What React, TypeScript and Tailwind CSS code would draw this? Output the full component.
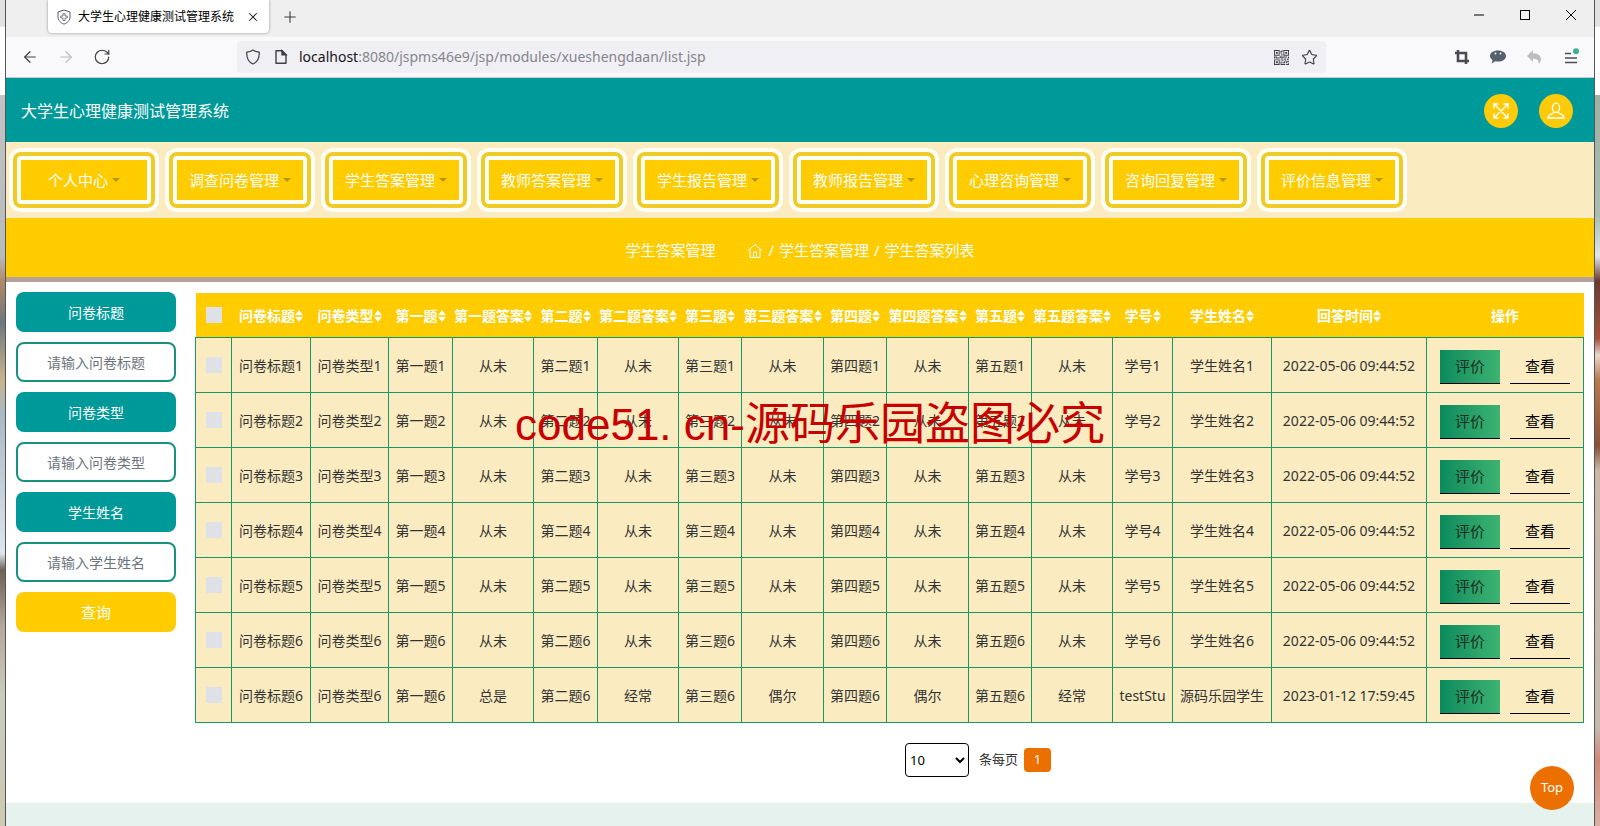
import { useState } from "react";
import { ArrowLeft, ArrowRight, Minus, Plus, RotateCw, Star, X } from "lucide-react";
import { BsQrCode } from "react-icons/bs";

const navItems = [
  "个人中心",
  "调查问卷管理",
  "学生答案管理",
  "教师答案管理",
  "学生报告管理",
  "教师报告管理",
  "心理咨询管理",
  "咨询回复管理",
  "评价信息管理",
];

const filters = [
  { id: "title", label: "问卷标题" },
  { id: "type", label: "问卷类型" },
  { id: "student", label: "学生姓名" },
];

const columns = [
  { label: "问卷标题", width: "w-[79px]" },
  { label: "问卷类型", width: "w-[78px]" },
  { label: "第一题", width: "w-[64px]" },
  { label: "第一题答案", width: "w-[81px]" },
  { label: "第二题", width: "w-[64px]" },
  { label: "第二题答案", width: "w-[81px]" },
  { label: "第三题", width: "w-[63px]" },
  { label: "第三题答案", width: "w-[82px]" },
  { label: "第四题", width: "w-[63px]" },
  { label: "第四题答案", width: "w-[82px]" },
  { label: "第五题", width: "w-[63px]" },
  { label: "第五题答案", width: "w-[81px]" },
  { label: "学号", width: "w-[60px]" },
  { label: "学生姓名", width: "w-[99px]" },
  { label: "回答时间", width: "w-[155px]" },
];

type Row = { no: number; answers: string[]; studentNo: string; student: string; time: string };

const rows: Row[] = [
  ...[1, 2, 3, 4, 5, 6].map((no) => ({
    no,
    answers: ["从未", "从未", "从未", "从未", "从未"],
    studentNo: `学号${no}`,
    student: `学生姓名${no}`,
    time: "2022-05-06 09:44:52",
  })),
  { no: 6, answers: ["总是", "经常", "偶尔", "偶尔", "经常"], studentNo: "testStu", student: "源码乐园学生", time: "2023-01-12 17:59:45" },
];

const questions = ["第一题", "第二题", "第三题", "第四题", "第五题"];

function rowCells(row: Row) {
  return [
    `问卷标题${row.no}`,
    `问卷类型${row.no}`,
    ...questions.flatMap((question, i) => [`${question}${row.no}`, row.answers[i]]),
    row.studentNo,
    row.student,
    row.time,
  ];
}

function SortIcon() {
  return (
    <svg viewBox="0 0 8 12" className="h-3 w-2 shrink-0" fill="currentColor" aria-hidden="true">
      <path d="M4 0 8 5.300H0zM4 12 0 6.700h8z" />
    </svg>
  );
}

function BrowserChrome() {
  return (
    <div className="text-[#3f3f46]">
      <div className="flex h-[37px] items-start justify-between bg-[#efefef]">
        <div className="flex items-center">
          <div className="ml-[42px] flex h-[33px] w-[221px] items-center rounded-b-[4px] bg-white pl-2 shadow-[0_0_3px_#00000066]">
            <svg viewBox="0 0 16 16" className="mr-1.5 size-4" fill="none" stroke="#5b5b66" aria-hidden="true">
              <path d="M8 1 14 3v5c0 3.500-2.500 5.800-6 7.200C4.500 13.800 2 11.500 2 8V3z" />
              <path d="M7 4.500h2V7h2.300v2H9v2.500H7V9H4.700V7H7z" strokeWidth="0.8" />
            </svg>
            <span className="text-xs text-black">大学生心理健康测试管理系统</span>
            <button type="button" aria-label="关闭标签页" className="ml-3 text-[#222]">
              <X className="size-3.5" strokeWidth={1.8} />
            </button>
          </div>
          <button type="button" aria-label="新标签页" className="ml-3">
            <Plus className="size-[18px]" strokeWidth={1.5} />
          </button>
        </div>
        <div className="flex gap-[30px] pt-[7px] pr-[15px] text-black">
          <button type="button" aria-label="最小化">
            <Minus className="size-4" strokeWidth={1.5} />
          </button>
          <button type="button" aria-label="最大化">
            <svg viewBox="0 0 16 16" className="size-4" fill="none" stroke="currentColor" aria-hidden="true">
              <rect x="3.500" y="3.500" width="9" height="9" />
            </svg>
          </button>
          <button type="button" aria-label="关闭">
            <svg viewBox="0 0 16 16" className="size-4" fill="none" stroke="currentColor" aria-hidden="true">
              <path d="M3 3l10 10M13 3 3 13" />
            </svg>
          </button>
        </div>
      </div>
      <div className="flex h-[41px] items-center border-b border-[#c9c9cf] bg-[#f9f9fb]">
        <div className="flex w-[231px] items-center gap-[18px] pl-[15px]">
          <button type="button" aria-label="后退">
            <ArrowLeft className="size-[18px]" strokeWidth={1.6} />
          </button>
          <button type="button" aria-label="前进" className="text-[#bcbcc2]">
            <ArrowRight className="size-[18px]" strokeWidth={1.6} />
          </button>
          <button type="button" aria-label="刷新">
            <RotateCw className="size-[18px]" strokeWidth={1.6} />
          </button>
        </div>
        <div className="flex h-8 flex-1 items-center rounded bg-[#f0f0f4] px-2">
          <svg viewBox="0 0 16 16" className="size-4" fill="none" stroke="currentColor" strokeWidth="1.200" aria-hidden="true">
            <path d="M8 1c2 1.500 4 2 6.300 2.200C14.500 9 12.500 13 8 15 3.500 13 1.500 9 1.700 3.200 4 3 6 2.500 8 1z" strokeLinejoin="round" />
          </svg>
          <svg viewBox="0 0 16 16" className="ml-3 size-4" fill="none" stroke="currentColor" strokeWidth="1.400" aria-hidden="true">
            <path d="M3 1.700h6l4 4v8.600H3z" strokeLinejoin="round" />
            <path d="M9 1.700v4h4z" fill="currentColor" />
          </svg>
          <p className="ml-2.5 flex-1 text-sm text-[#85858c]">
            <span className="text-[#15141a]">localhost</span>:8080/jspms46e9/jsp/modules/xueshengdaan/list.jsp
          </p>
          <BsQrCode className="mr-3 size-[15px]" />
          <Star className="size-[17px]" strokeWidth={1.6} />
        </div>
        <div className="flex w-[268px] items-center justify-end gap-5 pr-3.5 text-[#4a4a55]">
          <svg viewBox="0 0 16 16" className="size-4" fill="none" stroke="currentColor" strokeWidth="2.600" aria-hidden="true">
            <path d="M4 1v11h11M1 4h11v11" />
          </svg>
          <svg viewBox="0 0 16 16" className="size-4" aria-hidden="true">
            <path d="M8 1.500c4.500 0 8 2.300 8 5.500s-3.500 5.600-8 5.600c-1 0-1.800-.1-2.600-.3L1.600 14.500l.9-3.400C1.200 10 0 8.600 0 7c0-3.200 3.500-5.500 8-5.500z" fill="#56606f" />
            <circle cx="5.500" cy="4.500" r="0.9" fill="#fff" />
            <circle cx="10.500" cy="4.500" r="0.9" fill="#fff" />
          </svg>
          <svg viewBox="0 0 16 16" className="size-4 text-[#bdbdbf]" aria-hidden="true">
            <path d="M7 1v3.200c5 .1 8 2.300 8 6 0 2-1 3.600-2.400 4.800.6-3.500-1.300-5.200-5.600-5.300V13L1 7z" fill="currentColor" />
          </svg>
          <svg viewBox="0 0 18 18" className="size-[18px]" aria-hidden="true">
            <path d="M3 5.500h6M3 10h12M3 14.500h12" stroke="currentColor" strokeWidth="1.400" />
            <circle cx="14" cy="3.200" r="3" fill="#3fb093" />
          </svg>
        </div>
      </div>
    </div>
  );
}

function NavButton({ label }: { label: string }) {
  return (
    <button type="button" className="h-14 w-[142px] rounded-lg border-4 border-[#eecb26] bg-[#fffff5] p-1 text-[15px] text-white shadow-[0_0_0_4px_#fffff5]">
      <span className="flex h-full items-center justify-center gap-1 bg-[#ffcc00]">
        {label}
        <svg viewBox="0 0 8 4" className="h-1 w-2" fill="#b8960c" aria-hidden="true">
          <path d="M0 0h8L4 4z" />
        </svg>
      </span>
    </button>
  );
}

function SearchPanel() {
  return (
    <form className="flex w-40 shrink-0 flex-col gap-2.5 pt-2.5 text-sm" onSubmit={(e) => e.preventDefault()}>
      {filters.map((filter) => (
        <div key={filter.id} className="flex flex-col gap-2.5">
          <label htmlFor={filter.id} className="flex h-10 items-center justify-center rounded-lg bg-[#009999] pt-0.5 text-white">
            {filter.label}
          </label>
          <input
            id={filter.id}
            type="text"
            placeholder={`请输入${filter.label}`}
            className="h-10 w-full rounded-lg border-2 border-[#1a9080] bg-white text-center text-[#333] placeholder:text-[#6c757d]"
          />
        </div>
      ))}
      <button type="submit" className="h-10 rounded-lg bg-[#ffcc00] pt-0.5 text-[15px] text-white">
        查询
      </button>
    </form>
  );
}

function AnswerTable() {
  return (
    <table className="w-full table-fixed border-collapse text-center text-sm whitespace-nowrap text-[#333]">
      <colgroup>
        <col className="w-[36px]" />
        {columns.map((column) => (
          <col key={column.label} className={column.width} />
        ))}
        <col className="w-[157px]" />
      </colgroup>
      <thead>
        <tr className="h-11 bg-[#ffcc00] text-white">
          <th>
            <input type="checkbox" aria-label="全选" className="mx-auto block size-4 appearance-none bg-[#dee2e6]" />
          </th>
          {columns.map((column) => (
            <th key={column.label} className="pt-0.5 font-bold">
              <span className="flex items-center justify-center">
                {column.label}
                <SortIcon />
              </span>
            </th>
          ))}
          <th className="pt-0.5 font-bold">操作</th>
        </tr>
      </thead>
      <tbody>
        {rows.map((row, index) => (
          <tr key={index} className="h-[55px] bg-[#faecc0]">
            <td className="border border-[#1a9767]">
              <input type="checkbox" aria-label={`选择第${index + 1}行`} className="mx-auto block size-4 appearance-none bg-[#dee2e6]" />
            </td>
            {rowCells(row).map((cell, i) => (
              <td key={i} className="border border-[#1a9767] pt-0.5">
                {cell}
              </td>
            ))}
            <td className="border border-[#1a9767]">
              <div className="flex justify-center gap-2.5 pt-1 text-[15px] text-black">
                <button type="button" className="h-[34px] w-[60px] border-b border-black bg-linear-to-r from-[#078a5e] to-[#3cb371] pt-0.5 text-[#1c2f20]">
                  评价
                </button>
                <button type="button" className="h-[34px] w-[60px] border-b border-black pt-0.5">
                  查看
                </button>
              </div>
            </td>
          </tr>
        ))}
      </tbody>
    </table>
  );
}

export default function App() {
  const [pageSize, setPageSize] = useState("10");

  return (
    <div className="flex min-h-screen bg-[#c3c5c2] font-['Noto_Sans','Noto_Sans_CJK_SC',sans-serif]">
      <div className="w-[5px] shrink-0 bg-[linear-gradient(#e3e3e6_0_27px,#fff_27px_95px,#c0c4c4_95px,#b9bcbd_31%,#b08a68_34%,#6f777d_39%,#c9b48e_46%,#a9b9c6_50%,#dde6ec_67%,#6e6259_69%,#b5a99c_76%,#c9cbbd_84%,#cdc9b4)]" />
      <div className="relative flex min-w-0 flex-1 flex-col border-x border-[#555] bg-white">
        <BrowserChrome />

        <header className="flex h-16 items-center justify-between bg-[#009999] pt-0.5 pr-[21px] pl-[15px] text-white">
          <h1 className="text-base">大学生心理健康测试管理系统</h1>
          <div className="flex gap-[21px]">
            <button type="button" aria-label="全屏" className="flex size-[34px] items-center justify-center rounded-full bg-[#fdcb0a]">
              <svg viewBox="0 0 16 16" className="size-4" fill="none" stroke="currentColor" strokeWidth="1.300" aria-hidden="true">
                <path d="M1 1l14 14M15 1 1 15M1 5.500V1h4.500M10.500 1H15v4.500M15 10.500V15h-4.500M5.500 15H1v-4.500" />
              </svg>
            </button>
            <button type="button" aria-label="个人信息" className="flex size-[34px] items-center justify-center rounded-full bg-[#fdcb0a]">
              <svg viewBox="0 0 18 18" className="size-[18px]" fill="none" stroke="currentColor" strokeWidth="1.300" aria-hidden="true">
                <ellipse cx="9" cy="5.800" rx="3.600" ry="4.600" />
                <path d="M7 10.200c0 1.500-5.800 1.500-6 5.800h16c-.2-4.300-6-4.300-6-5.800" />
              </svg>
            </button>
          </div>
        </header>

        <nav className="flex h-[76px] items-center gap-[14px] bg-[#faecc0] px-[7px]">
          {navItems.map((item) => (
            <NavButton key={item} label={item} />
          ))}
        </nav>

        <div className="flex h-16 items-center justify-center gap-8 border-b-[5px] border-[#b8a09a] bg-[#ffcc00] pt-1.5 text-[15px] text-white">
          <h2>学生答案管理</h2>
          <div className="flex items-center gap-[5px]">
            <a href="#home" aria-label="首页">
              <svg viewBox="0 0 16 16" className="size-4" fill="none" stroke="currentColor" aria-hidden="true">
                <path d="M1 7.500 8 1.500l7 6M3 6v8.500h10V6M6.500 14.500V9h3v5.500" />
              </svg>
            </a>
            <span>/</span>
            <a href="#answers">学生答案管理</a>
            <span>/</span>
            <span>学生答案列表</span>
          </div>
        </div>

        <main className="flex gap-[19px] pr-2.5 pb-[26px] pl-2.5">
          <SearchPanel />
          <div className="min-w-0 flex-1 pt-[11px]">
            <AnswerTable />
            <div className="mt-5 flex items-center justify-center pl-[177px] text-[13px] text-[#333]">
              <select
                id="page-size"
                value={pageSize}
                onChange={(e) => setPageSize(e.target.value)}
                className="h-[34px] w-16 rounded border border-black bg-white text-black"
              >
                <option>10</option>
                <option>25</option>
                <option>50</option>
              </select>
              <label htmlFor="page-size" className="ml-2.5">
                条每页
              </label>
              <button type="button" className="ml-1.5 h-6 w-[27px] rounded bg-[#ec7000] text-white">
                1
              </button>
            </div>
          </div>
        </main>
        <footer className="flex-1 bg-[#e6f2ed]" />

        <button type="button" className="absolute right-5 bottom-4 size-11 rounded-full bg-[#ec7000] text-[13px] text-white">
          Top
        </button>
        <p className="pointer-events-none absolute top-[391px] left-[509px] font-['Liberation_Sans','Noto_Sans_CJK_SC',sans-serif] text-[45px] whitespace-pre text-[#c80000]">
          <span className="text-[44px]">code51. cn-</span>源码乐园盗图必究
        </p>
      </div>
      <div className="w-[5px] shrink-0 bg-[linear-gradient(#e3e3e6_0_27px,#fff_27px_95px,#9fb0a4_95px,#a9bdb0_26%,#dfe8ea_31%,#6b3a30_34%,#a4503c_41%,#e8d8cc_43%,#b87850_46%,#8a5038_54%,#c9b8a8_57%,#c4bab2_88%,#d08878_92%,#d8b0a4)]" />
    </div>
  );
}
